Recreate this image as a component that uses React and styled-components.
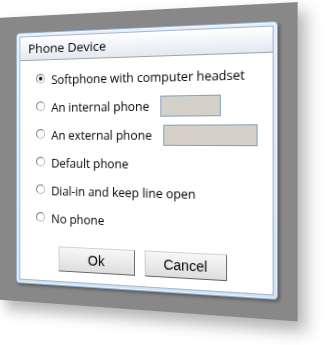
import React from "react";
import styled, { createGlobalStyle } from "styled-components";

const Global = createGlobalStyle`
  html, body {
    margin: 0;
    padding: 0;
    background: #ffffff;
    overflow: hidden;
  }
  body {
    width: 325px;
    height: 345px;
  }
`;

/* The grey backdrop, seen in perspective (rotated around a vertical axis). */
const Stage = styled.div`
  display: flex;
  width: max-content;
  padding: 17px 18px 19px 19px;
  background: #888888;
  box-shadow: 7px 9px 14px rgba(0, 0, 0, 0.3);
  transform-origin: 0 0;
  transform: matrix3d(
      0.863352, -0.05253, 0, -0.00038496,
      0, 0.943396, 0, 0,
      0, 0, 1, 0,
      16, 33, 0, 1
    )
    translate(-19px, -17px);
`;

const Dialog = styled.div`
  box-sizing: border-box;
  width: 270px;
  height: 265px;
  display: flex;
  flex-direction: column;
  padding: 3px;
  border: 1px solid #8eadcc;
  border-radius: 4px;
  background: linear-gradient(#e4effa, #cfe2f5);
  box-shadow: inset 0 0 0 1px rgba(255, 255, 255, 0.55),
    2px 2px 3px rgba(0, 0, 0, 0.3);
`;

const Inner = styled.div`
  flex: 1;
  display: flex;
  flex-direction: column;
  background: #ffffff;
  border: 1px solid #a4b7cb;
`;

const TitleBar = styled.div`
  height: 24px;
  padding-left: 9px;
  border-bottom: 1px solid #a3a3a3;
  background: linear-gradient(#ffffff, #e3e9f1);
  font: 13.5px/25px "Open Sans", sans-serif;
  color: #000000;
`;

const Body = styled.div`
  flex: 1;
  display: flex;
  flex-direction: column;
  padding-top: 6px;
`;

const OptionList = styled.div`
  display: flex;
  flex-direction: column;
  padding-left: 18px;
`;

const Row = styled.label`
  height: 29px;
  display: flex;
  align-items: center;
  font: 12.5px "Open Sans", sans-serif;
  color: #000000;
  white-space: nowrap;
`;

const Radio = styled.span`
  box-sizing: border-box;
  width: 10px;
  height: 10px;
  margin-right: 7px;
  margin-top: -3px;
  border-radius: 50%;
  border: 1.3px solid #6f6f6f;
  border-right-color: #b4b4b4;
  border-bottom-color: #b4b4b4;
  background: radial-gradient(circle at 60% 60%, #ffffff 55%, #e6e6e6);
  display: flex;
  align-items: center;
  justify-content: center;
  &::after {
    content: "";
    width: 4px;
    height: 4px;
    border-radius: 50%;
    background: ${(p) => (p.$checked ? "#111111" : "transparent")};
  }
`;

const Field = styled.span`
  box-sizing: border-box;
  width: ${(p) => p.$w}px;
  height: 21px;
  margin-left: 11px;
  background: #d5d1c9;
  border: 1px solid #819fbd;
`;

const ButtonRow = styled.div`
  display: flex;
  justify-content: center;
  gap: 10px;
  margin-top: 14px;
`;

const Button = styled.button`
  box-sizing: border-box;
  width: 82px;
  height: 26px;
  padding: 0;
  font: 14px "Liberation Sans", Arial, sans-serif;
  color: #000000;
  background: linear-gradient(#f7f7f7, #ebebeb 50%, #dddddd);
  border: 1px solid;
  border-color: #d2d2d2 #6e6e6e #666666 #cfcfcf;
  border-radius: 0;
`;

const options = [
  { label: "Softphone with computer headset", checked: true },
  { label: "An internal phone", field: 60 },
  { label: "An external phone", field: 92 },
  { label: "Default phone" },
  { label: "Dial-in and keep line open" },
  { label: "No phone" },
];

export default function App() {
  return (
    <>
      <Global />
      <Stage>
        <Dialog>
          <Inner>
            <TitleBar>Phone Device</TitleBar>
            <Body>
              <OptionList>
                {options.map((o) => (
                  <Row key={o.label}>
                    <Radio $checked={o.checked} />
                    {o.label}
                    {o.field ? <Field $w={o.field} /> : null}
                  </Row>
                ))}
              </OptionList>
              <ButtonRow>
                <Button>Ok</Button>
                <Button>Cancel</Button>
              </ButtonRow>
            </Body>
          </Inner>
        </Dialog>
      </Stage>
    </>
  );
}
